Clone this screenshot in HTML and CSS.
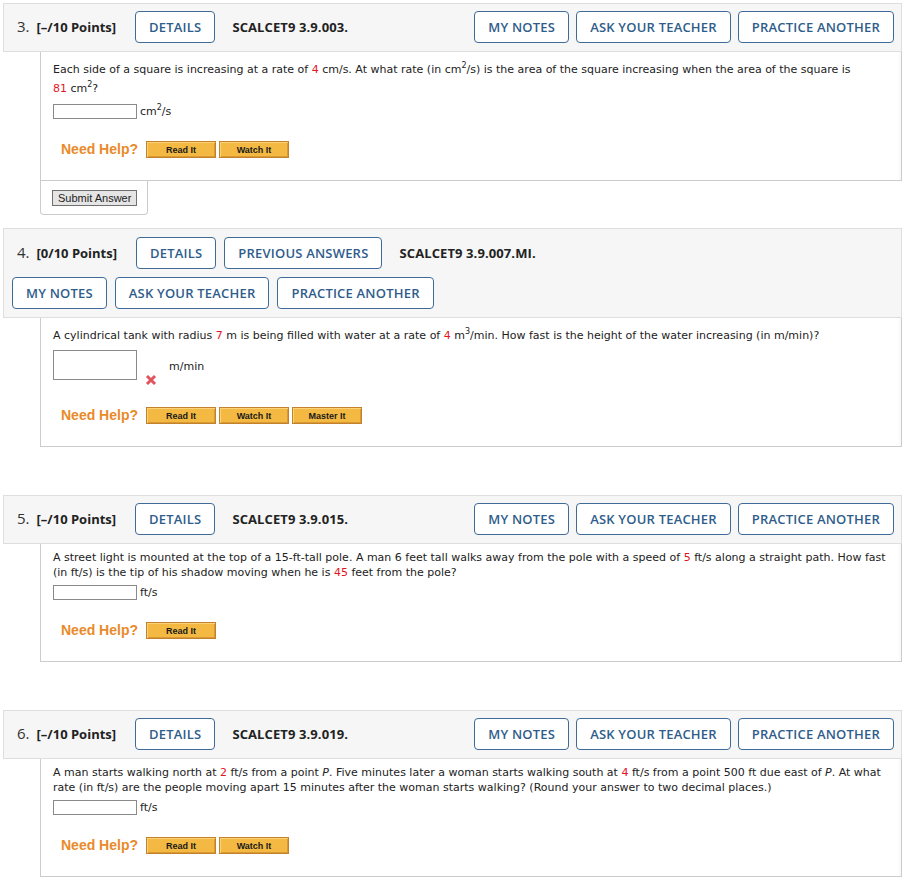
FILE: index.html
```html
<!DOCTYPE html>
<html>
<head>
<meta charset="utf-8">
<title>Questions</title>
<link rel="stylesheet" href="styles.css">
</head>
<body>
<div class="page">

  <section class="q q-first">
    <div class="qhead">
      <span class="qnum">3.</span>
      <span class="pts">[–/10 Points]</span>
      <button class="vbtn">DETAILS</button>
      <span class="code">SCALCET9 3.9.003.</span>
      <div class="right">
        <button class="vbtn">MY NOTES</button>
        <button class="vbtn">ASK YOUR TEACHER</button>
        <button class="vbtn">PRACTICE ANOTHER</button>
      </div>
    </div>
    <div class="qbody">
      <p class="text">Each side of a square is increasing at a rate of <span class="red">4</span> cm/s. At what rate (in cm<sup>2</sup>/s) is the area of the square increasing when the area of the square is <span class="red">81</span>&nbsp;cm<sup>2</sup>?</p>
      <div class="answer answer-sup"><input class="field" type="text"><span class="unit">cm<sup>2</sup>/s</span></div>
      <div class="help"><span class="nh">Need Help?</span><button class="hb">Read It</button><button class="hb">Watch It</button></div>
    </div>
    <div class="submit"><button class="sbtn">Submit Answer</button></div>
  </section>

  <section class="q">
    <div class="qhead qhead-two">
      <div class="row">
        <span class="qnum">4.</span>
        <span class="pts">[0/10 Points]</span>
        <button class="vbtn">DETAILS</button>
        <button class="vbtn">PREVIOUS ANSWERS</button>
        <span class="code">SCALCET9 3.9.007.MI.</span>
      </div>
      <div class="row row-btns">
        <button class="vbtn">MY NOTES</button>
        <button class="vbtn">ASK YOUR TEACHER</button>
        <button class="vbtn">PRACTICE ANOTHER</button>
      </div>
    </div>
    <div class="qbody">
      <p class="text">A cylindrical tank with radius <span class="red">7</span> m is being filled with water at a rate of <span class="red">4</span> m<sup>3</sup>/min. How fast is the height of the water increasing (in m/min)?</p>
      <div class="answer answer-tall">
        <input class="field field-tall" type="text">
        <svg class="xmark" width="12" height="12" viewBox="0 0 12 12" aria-hidden="true"><path d="M2 2 L10 10 M10 2 L2 10" stroke="#e2545c" stroke-width="3" fill="none"/></svg>
        <span class="unit unit-far">m/min</span>
      </div>
      <div class="help"><span class="nh">Need Help?</span><button class="hb">Read It</button><button class="hb">Watch It</button><button class="hb">Master It</button></div>
    </div>
  </section>

  <section class="q">
    <div class="qhead">
      <span class="qnum">5.</span>
      <span class="pts">[–/10 Points]</span>
      <button class="vbtn">DETAILS</button>
      <span class="code">SCALCET9 3.9.015.</span>
      <div class="right">
        <button class="vbtn">MY NOTES</button>
        <button class="vbtn">ASK YOUR TEACHER</button>
        <button class="vbtn">PRACTICE ANOTHER</button>
      </div>
    </div>
    <div class="qbody">
      <p class="text">A street light is mounted at the top of a 15-ft-tall pole. A man 6 feet tall walks away from the pole with a speed of <span class="red">5</span> ft/s along a straight path. How fast (in ft/s) is the tip of his shadow moving when he is <span class="red">45</span> feet from the pole?</p>
      <div class="answer"><input class="field" type="text"><span class="unit">ft/s</span></div>
      <div class="help"><span class="nh">Need Help?</span><button class="hb">Read It</button></div>
    </div>
  </section>

  <section class="q">
    <div class="qhead">
      <span class="qnum">6.</span>
      <span class="pts">[–/10 Points]</span>
      <button class="vbtn">DETAILS</button>
      <span class="code">SCALCET9 3.9.019.</span>
      <div class="right">
        <button class="vbtn">MY NOTES</button>
        <button class="vbtn">ASK YOUR TEACHER</button>
        <button class="vbtn">PRACTICE ANOTHER</button>
      </div>
    </div>
    <div class="qbody">
      <p class="text">A man starts walking north at <span class="red">2</span> ft/s from a point <span class="it">P</span>. Five minutes later a woman starts walking south at <span class="red">4</span> ft/s from a point 500 ft due east of <span class="it">P</span>. At what rate (in ft/s) are the people moving apart 15 minutes after the woman starts walking? (Round your answer to two decimal places.)</p>
      <div class="answer"><input class="field" type="text"><span class="unit">ft/s</span></div>
      <div class="help"><span class="nh">Need Help?</span><button class="hb">Read It</button><button class="hb">Watch It</button></div>
    </div>
  </section>

</div>
</body>
</html>
```

FILE: styles.css
```css
* { box-sizing: border-box; }
html, body { margin: 0; background: #ffffff; }
body {
  padding: 3px 0 0 3px;
  font-family: "DejaVu Sans", Verdana, sans-serif;
  color: #222;
}
.page { width: 899px; }

.q { margin-bottom: 48px; }
.q-first { margin-bottom: 13px; }

/* header */
.qhead {
  display: flex;
  align-items: center;
  background: #f6f6f6;
  border: 1px solid #dedede;
  padding: 7px 7px 8px 13px;
  font-family: "Open Sans", sans-serif;
  color: #222;
}
.qhead-two {
  flex-direction: column;
  align-items: stretch;
  padding: 8px;
  gap: 8px;
}
.row { display: flex; align-items: center; }
.row-btns { gap: 8px; }
.qhead-two .qnum { margin-left: 5px; }
.qhead-two .pts + .vbtn + .vbtn { margin-left: 8px; }

.qnum { font-size: 15px; margin-right: 7px; margin-top: -2px; color: #333; }
.pts { font-size: 13px; font-weight: 700; margin-right: 19px; }
.code { font-size: 13px; font-weight: 700; margin-left: 17px; letter-spacing: 0.1px; }
.right { margin-left: auto; display: flex; gap: 7px; }

.vbtn {
  height: 32px;
  padding: 0 13px;
  border: 1px solid #3e6b97;
  border-radius: 4px;
  background: #fff;
  color: #2f5d8b;
  font-family: "Open Sans", sans-serif;
  font-size: 13px;
  font-weight: 600;
  letter-spacing: 0.2px;
}

/* body */
.qbody {
  margin-left: 37px;
  border: 1px solid #cccccc;
  border-top: 0;
  padding: 6px 12px 22px 12px;
  font-size: 11px;
  line-height: 15px;
  box-shadow: inset -5px 0 5px -5px rgba(0,0,0,0.06);
}
.text { margin: 0; }
.red { color: #e3141f; }
.it { font-style: italic; }
sup { font-size: 8px; line-height: 15px; vertical-align: 5px; }

.answer { margin-top: 5px; display: flex; align-items: flex-end; }
.answer-sup { margin-top: 4px; }
.field {
  width: 84px;
  height: 15px;
  margin: 0;
  padding: 0;
  border: 1px solid #8a8a8a;
  background: #fff;
}
.unit { margin-left: 3px; }

.answer-tall { margin-top: 7px; align-items: center; }
.field-tall { height: 30px; }
.xmark { align-self: flex-end; margin: 0 0 -6px 8px; }
.unit-far { margin-left: 12px; margin-top: 2px; }
.answer-tall + .help { margin-top: 27px; }

.help { display: flex; align-items: center; margin-top: 22px; padding-left: 8px; }
.nh {
  font-family: "Liberation Sans", Arial, sans-serif;
  font-weight: 700;
  font-size: 14px;
  color: #e98a2a;
  margin-right: 8px;
}
.hb {
  width: 70px;
  height: 17px;
  margin: 0 3px 0 0;
  padding: 0;
  border: 1px solid #c4812c;
  background: #f3b942;
  box-shadow: inset 1px 1px 0 #fad27a, inset -1px -1px 0 #d99a34;
  font-family: "Liberation Sans", Arial, sans-serif;
  font-weight: 700;
  font-size: 9px;
  color: #1a1a1a;
}

/* submit */
.submit {
  display: flex;
  margin-left: 37px;
  width: 108px;
  border: 1px solid #cccccc;
  border-top: 0;
  border-radius: 0 0 4px 4px;
  padding: 9px 0 8px 11px;
}
.sbtn {
  display: block;
  height: 16px;
  padding: 0 5px;
  border: 1px solid #707070;
  background: #e5e5e5;
  font-family: "Liberation Sans", Arial, sans-serif;
  font-size: 11px;
  color: #222;
  line-height: 14px;
}
```
